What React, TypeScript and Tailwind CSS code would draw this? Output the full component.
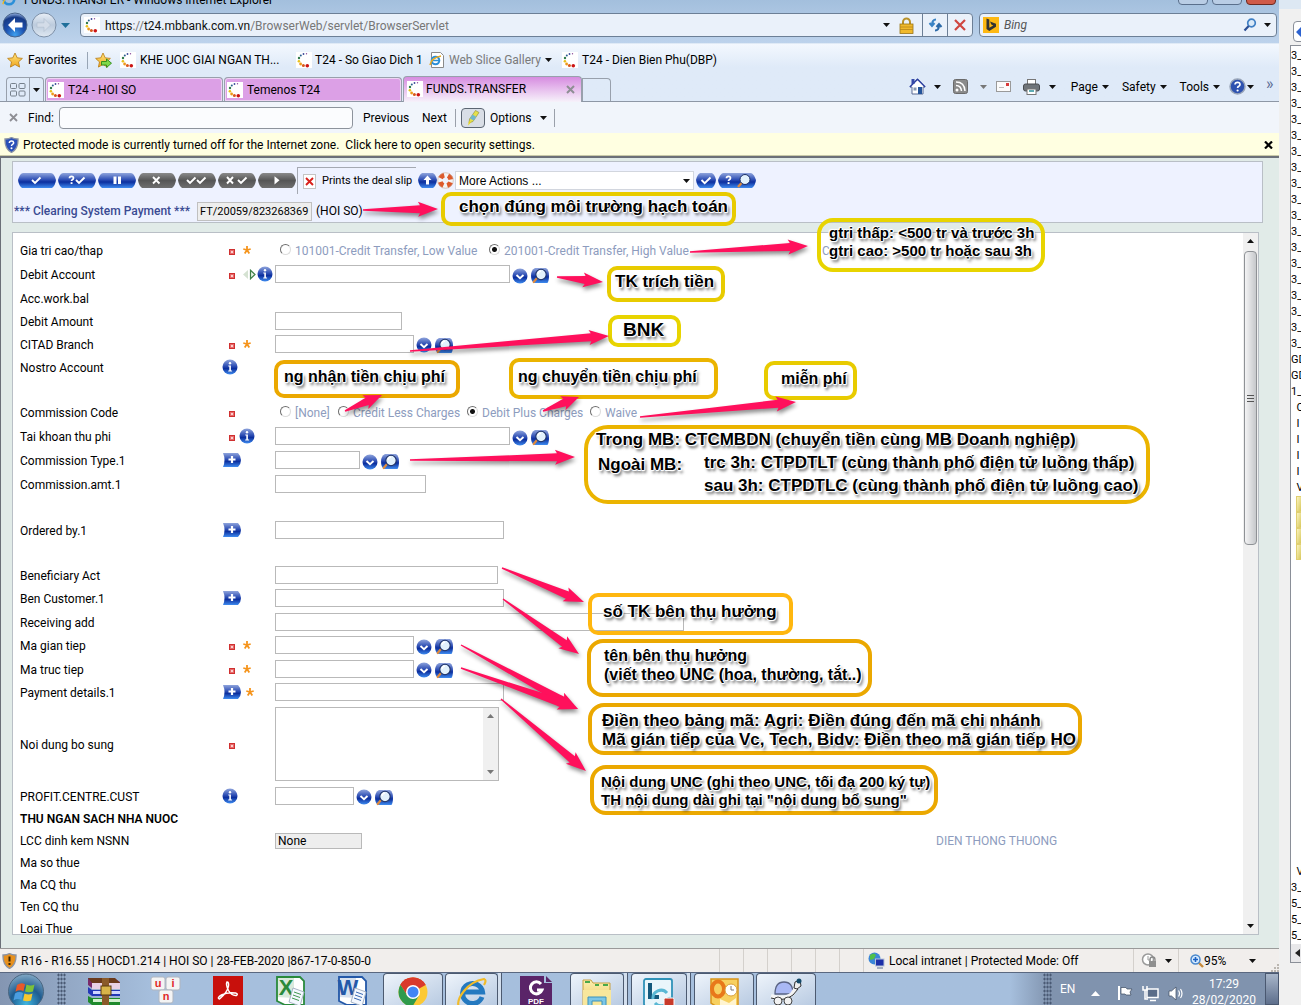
import React from "react";

const ui = "font-['Roboto',sans-serif]";

/* ---------- shared gradients ---------- */
function Defs() {
  return (
    <svg width="0" height="0" className="absolute" aria-hidden="true">
      <defs>
        <linearGradient id="blue" x1="0" y1="0" x2="0" y2="1">
          <stop offset="0" stopColor="#8fa4dc" />
          <stop offset="0.45" stopColor="#2c4db4" />
          <stop offset="0.6" stopColor="#0c2f9e" />
          <stop offset="1" stopColor="#3f8cf0" />
        </linearGradient>
        <linearGradient id="grey" x1="0" y1="0" x2="0" y2="1">
          <stop offset="0" stopColor="#8a8a8a" />
          <stop offset="0.5" stopColor="#565656" />
          <stop offset="1" stopColor="#6e6e6e" />
        </linearGradient>
        <radialGradient id="back" cx="0.5" cy="0.9" r="0.9">
          <stop offset="0" stopColor="#3fa0ee" />
          <stop offset="0.45" stopColor="#1c4fae" />
          <stop offset="0.8" stopColor="#173a86" />
          <stop offset="1" stopColor="#9db9e6" />
        </radialGradient>
        <linearGradient id="fwd" x1="0" y1="0" x2="0" y2="1">
          <stop offset="0" stopColor="#e9eff7" />
          <stop offset="0.5" stopColor="#bccbdd" />
          <stop offset="1" stopColor="#dfe8f2" />
        </linearGradient>
        <radialGradient id="orb" cx="0.5" cy="0.85" r="0.9">
          <stop offset="0" stopColor="#3fb5e0" />
          <stop offset="0.5" stopColor="#1e5c90" />
          <stop offset="1" stopColor="#8fb2cc" />
        </radialGradient>
        <linearGradient id="gold" x1="0" y1="0" x2="0" y2="1">
          <stop offset="0" stopColor="#ffe680" />
          <stop offset="1" stopColor="#f0a51c" />
        </linearGradient>
        <linearGradient id="folder" x1="0" y1="0" x2="0" y2="1">
          <stop offset="0" stopColor="#fbeeb0" />
          <stop offset="1" stopColor="#ecc75c" />
        </linearGradient>
      </defs>
    </svg>
  );
}

/* ---------- small icons ---------- */
const Tri = ({ gray = false, className = "" }: { gray?: boolean; className?: string }) => (
  <svg width="7" height="4" viewBox="0 0 7 4" className={"shrink-0 " + className}>
    <path d="M0 0h7L3.500 4z" fill={gray ? "#777" : "#111"} />
  </svg>
);

const Favicon = () => (
  <svg width="16" height="16" viewBox="0 0 16 16" className="shrink-0 bg-white">
    <circle cx="10.500" cy="1.700" r="0.700" fill="#8a4a9a" />
    <circle cx="7.500" cy="2" r="0.900" fill="#3a4a9a" />
    <circle cx="4.800" cy="3.400" r="1" fill="#2b5f8f" />
    <circle cx="3" cy="6" r="1.200" fill="#2f7a4a" />
    <circle cx="2.900" cy="9.200" r="1.300" fill="#e8c21c" />
    <circle cx="4.600" cy="12" r="1.400" fill="#ee9a1a" />
    <circle cx="7.400" cy="13.400" r="1.500" fill="#d8581c" />
    <circle cx="11.300" cy="13.700" r="1.800" fill="#cc1414" />
  </svg>
);

const Star = ({ arrow = false }: { arrow?: boolean }) => (
  <svg width="17" height="17" viewBox="0 0 17 17" className="shrink-0">
    <path d="M8 1l2.200 4.800 5.200.600-3.900 3.500 1.100 5.200L8 12.500l-4.600 2.600 1.100-5.200L.6 6.400l5.200-.6z" fill="url(#gold)" stroke="#b87a10" strokeWidth="0.800" />
    {arrow && <path d="M6.500 9.500h5V7l5 4.200-5 4.300V13h-5z" fill="#7fd84a" stroke="#2c8a1a" strokeWidth="0.900" />}
  </svg>
);

const Info = () => (
  <svg width="16" height="16" viewBox="0 0 16 16" className="shrink-0">
    <circle cx="8" cy="8" r="7.500" fill="url(#blue)" />
    <path d="M6.300 6.500h2.600v5h1.200v1H6.200v-1h1.100v-4h-1z" fill="#fff" />
    <circle cx="8" cy="4.300" r="1.200" fill="#fff" />
  </svg>
);

const Drop = () => (
  <svg width="16" height="16" viewBox="0 0 16 16" className="shrink-0">
    <circle cx="8" cy="8" r="7.500" fill="url(#blue)" />
    <path d="M4.500 7L8 10.200 11.500 7" fill="none" stroke="#fff" strokeWidth="1.900" />
  </svg>
);

const Lens = () => (
  <svg width="20" height="17" viewBox="0 0 20 17" className="shrink-0">
    <path d="M5 1h11q3 2 3 7.500T17.500 16H4Q1 14 1 8.500T5 1z" fill="url(#blue)" />
    <path d="M7 11l-3.300 4" stroke="#e08a3c" strokeWidth="2.200" strokeLinecap="round" />
    <circle cx="11" cy="7.500" r="5.200" fill="#e2f1fc" stroke="#1a2f66" strokeWidth="1.100" />
    <path d="M8 7a3 3 0 0 1 3-2.800" stroke="#fff" strokeWidth="1.400" fill="none" />
  </svg>
);

const Plus = () => (
  <svg width="20" height="16" viewBox="0 0 20 16" className="shrink-0">
    <path d="M1 1h15q3 3 3 7t-3 7H1q3-7 0-14z" fill="url(#blue)" />
    <path d="M10 4v7M6.500 7.500h7" stroke="#fff" strokeWidth="2.200" />
  </svg>
);

const Dot = () => (
  <svg width="17" height="16" viewBox="0 0 17 16" className="shrink-0">
    <rect x="7.500" y="7.500" width="5" height="5" fill="#e86a6a" stroke="#cf3030" />
    <rect x="9" y="9" width="2" height="2" fill="#fbd0d0" />
  </svg>
);

const Req = () => (
  <svg width="8" height="8" viewBox="0 0 8 8" className="ml-1 shrink-0">
    <path d="M4 0v4M4 4L.3 3M4 4l3.700-1M4 4L1.700 7.500M4 4l2.300 3.500" stroke="#f5941c" strokeWidth="1.800" />
  </svg>
);

const Sides = () => (
  <svg width="14" height="11" viewBox="0 0 14 11" className="ml-1 shrink-0">
    <path d="M5 1v9L0 5.500z" fill="#d5e2d2" />
    <path d="M7.500 1.200l4.500 4.300-4.500 4.300z" fill="#e9f4e6" stroke="#3f7f48" strokeWidth="1.200" />
  </svg>
);

type Pill = { name: string; off?: boolean; art: React.ReactNode };

const Check = ({ x }: { x: number }) => <path d={`M${x} 7l3 3 5.500-5.500`} fill="none" stroke="#fff" strokeWidth="1.900" />;

const pills: Pill[] = [
  { name: "Commit", art: <Check x={14} /> },
  { name: "Validate", art: (<><path d="M11.500 5.300q0-2 2-2t2 1.700q0 1.100-1.200 1.700-.8.500-.8 1.300" fill="none" stroke="#fff" strokeWidth="1.700" /><rect x="12.600" y="9.200" width="1.900" height="1.800" fill="#fff" /><Check x={18} /></>) },
  { name: "Hold", art: <path d="M17 3.500v7.500M21.500 3.500v7.500" stroke="#fff" strokeWidth="3" /> },
  { name: "Delete", off: true, art: <path d="M15 4l6.500 6.500M21.500 4L15 10.500" stroke="#fff" strokeWidth="1.900" /> },
  { name: "Authorise", off: true, art: (<><Check x={9} /><Check x={19} /></>) },
  { name: "Reverse", off: true, art: (<><path d="M9 4l6 6.500M15 4l-6 6.500" stroke="#fff" strokeWidth="1.900" /><Check x={20} /></>) },
  { name: "Run", off: true, art: <path d="M16.500 3.200v8.200l5-4.100z" fill="#fff" /> },
];

const PillButton = ({ p }: { p: Pill }) => (
  <button aria-label={p.name} className="shrink-0">
    <svg width="38" height="15" viewBox="0 0 38 15" className="block">
      <path d="M5 0h28q3 0 5 7-.5 5-4 8H4q-3.500-3-4-8Q2 0 5 0z" fill={p.off ? "url(#grey)" : "url(#blue)"} />
      {p.art}
    </svg>
  </button>
);

/* ---------- browser chrome ---------- */
function TitleBar() {
  return (
    <div className="flex h-[9px] items-end justify-between overflow-hidden">
      <div className="flex items-end gap-1 pl-[2px] text-xs leading-4">
        <svg width="14" height="14" viewBox="0 0 16 16" className="mb-[3px]">
          <circle cx="8" cy="8" r="6" fill="none" stroke="#2b8fd8" strokeWidth="3" />
          <path d="M1 14Q3 4 15 2" stroke="#f0b820" strokeWidth="1.500" fill="none" />
        </svg>
        <span className="pb-px pl-1">FUNDS.TRANSFER - Windows Internet Explorer</span>
      </div>
      <div className="flex gap-1 pr-[3px] pb-1">
        <div className="flex h-3 w-[30px] items-end justify-center rounded-b border border-[#5a6f8c] bg-[#b9cde5]"><i className="mb-[5px] h-1 w-2.5 border border-[#555] bg-white" /></div>
        <div className="flex h-3 w-[30px] items-end justify-center rounded-b border border-[#5a6f8c] bg-[#b9cde5]"><i className="mb-1 h-2 w-2 border border-[#555] bg-white" /></div>
        <div className="flex h-3 w-[30px] items-end justify-center rounded-b border border-[#6b2a22] bg-[#cf5a48]"><i className="mb-1 h-1 w-2.5 bg-white" /></div>
      </div>
    </div>
  );
}

function AddressBar() {
  return (
    <div className="flex h-[34px] items-center pt-[1px] pr-[2px] pl-[2px] pb-[3px]">
      <button aria-label="Back" className="shrink-0">
        <svg width="26" height="26" viewBox="0 0 26 26">
          <circle cx="13" cy="13" r="12" fill="url(#back)" stroke="#4a658c" />
          <path d="M13 6l-7 7 7 7v-4.600h7.500v-4.800H13z" fill="#fff" />
        </svg>
      </button>
      <button aria-label="Forward" className="ml-[3px] shrink-0">
        <svg width="26" height="26" viewBox="0 0 26 26">
          <circle cx="13" cy="13" r="12" fill="url(#fwd)" stroke="#7d90a8" />
          <path d="M13 6.500l6.500 6.500-6.500 6.500v-4.300H6v-4.400h7z" fill="#d3dce8" stroke="#b0bdcd" strokeWidth="0.600" />
        </svg>
      </button>
      <svg width="9" height="5" viewBox="0 0 9 5" className="mx-1 shrink-0"><path d="M0 0h9L4.500 5z" fill="#1f6f9a" /></svg>
      <div className="ml-[6px] flex h-6 flex-1 items-center rounded-sm border border-[#6c7f96] bg-[#eaf1fa]">
        <div className="flex flex-1 items-center gap-[5px] pr-2 pl-[3px]">
          <Favicon />
          <div aria-label="Address" className="flex-1 pt-px text-xs text-[#777]">
            <span className="text-[#111]">https</span>://<span className="text-[#111]">t24.mbbank.com.vn</span>/BrowserWeb/servlet/BrowserServlet
          </div>
          <Tri />
          <svg width="15" height="17" viewBox="0 0 15 17" className="ml-1">
            <path d="M4 8V5a3.500 3.500 0 0 1 7 0v3" fill="none" stroke="#b8912a" strokeWidth="2" />
            <rect x="1" y="7" width="13" height="9.500" fill="#f0b92c" stroke="#9a7418" strokeWidth="0.800" />
            <path d="M1 10h13M1 12.500h13" stroke="#b8861a" strokeWidth="0.800" />
          </svg>
        </div>
        <button aria-label="Refresh" className="flex h-full w-[25px] items-center justify-center border-l border-[#6c7f96]">
          <svg width="15" height="14" viewBox="0 0 15 14" fill="none" stroke="#3a83c4" strokeWidth="2">
            <path d="M8 1.500Q4 1.500 4 7M1.500 5L4 8l2.500-3" />
            <path d="M7 12.500q4 0 4-5.500M8.500 9L11 6l2.500 3" stroke="#2c6aa8" />
          </svg>
        </button>
        <button aria-label="Stop" className="flex h-full w-[25px] items-center justify-center border-l border-[#6c7f96]">
          <svg width="12" height="12" viewBox="0 0 12 12"><path d="M1 1l10 10M11 1L1 11" stroke="#cf4640" strokeWidth="2.200" /></svg>
        </button>
      </div>
      <div className="ml-[6px] flex h-6 w-[298px] shrink-0 items-center rounded-sm border border-[#6c7f96] bg-[#eaf1fa] px-[3px]">
        <svg width="16" height="16" viewBox="0 0 16 16" className="shrink-0"><rect width="16" height="16" fill="#fdb813" /><path d="M3.500 1.500l2.800 1v8.300l4-2.200-2-1L7 4.600l6 2.200v3L6.300 14 3.500 12z" fill="#333" /></svg>
        <input aria-label="Search Bing" placeholder="Bing" className="ml-[5px] w-0 flex-1 bg-transparent text-xs italic outline-none placeholder:text-[#555]" />
        <svg width="14" height="14" viewBox="0 0 14 14" className="mr-[7px]"><circle cx="8.500" cy="5" r="3.800" fill="#dbeaf8" stroke="#3f7fc4" strokeWidth="1.700" /><path d="M5.700 8L1.500 12.500" stroke="#2c4f94" strokeWidth="2.200" /></svg>
        <Tri className="mr-[2px]" />
      </div>
    </div>
  );
}

function FavoritesBar() {
  return (
    <div className="flex h-8 items-center pl-[7px] text-xs">
      <button className="flex w-[81px] items-center gap-1 border-r border-[#98a5b5]"><Star />Favorites</button>
      <button aria-label="Add to favorites" className="ml-[7px] mr-[8px]"><Star arrow /></button>
      <a href="#khe" className="flex w-[176px] items-center gap-1 whitespace-nowrap"><Favicon />KHE UOC GIAI NGAN TH...</a>
      <a href="#sgd" className="flex w-[133px] items-center gap-[3px] whitespace-nowrap"><Favicon />T24 - So Giao Dich 1</a>
      <button className="flex w-[133px] items-center gap-1 whitespace-nowrap text-[#7a7a7a]">
        <svg width="16" height="16" viewBox="0 0 16 16" className="shrink-0">
          <path d="M2.500.5h9l3 3v12h-12z" fill="#fff" stroke="#8a8a8a" />
          <circle cx="6.500" cy="8.500" r="3.800" fill="none" stroke="#2b8fd8" strokeWidth="2" />
          <path d="M3 8.500h7" stroke="#2b8fd8" strokeWidth="1.500" /><path d="M1 13Q2 6 12 4" stroke="#e8a820" strokeWidth="1.500" fill="none" />
        </svg>
        Web Slice Gallery <Tri />
      </button>
      <a href="#dbp" className="flex items-center gap-1 whitespace-nowrap"><Favicon />T24 - Dien Bien Phu(DBP)</a>
    </div>
  );
}

function TabRow() {
  return (
    <div className="flex h-[26px] items-end border-b border-[#8e97a5] pl-[6px] text-xs">
      <div className="flex h-6 shrink-0 rounded-t border border-b-0 border-[#98a0ac]">
        <button aria-label="Quick tabs" className="flex w-[23px] items-center justify-center border-r border-[#98a0ac]">
          <svg width="16" height="14" viewBox="0 0 16 14" fill="none" stroke="#76808c">
            <rect x="0.500" y="0.500" width="6" height="5" rx="1" /><rect x="9" y="0.500" width="6" height="5" rx="1" /><rect x="0.500" y="8" width="6" height="5" rx="1" /><rect x="9" y="8" width="6" height="5" rx="1" />
          </svg>
        </button>
        <button aria-label="Tab list" className="flex w-[13px] items-center justify-center"><Tri /></button>
      </div>
      <button className="ml-px flex h-6 w-[178px] items-center gap-1 rounded-t border border-b-0 border-[#98a0ac] bg-[#dca0e6] pl-[2px] shadow-[inset_0_0_0_1px_#eed3f3]"><Favicon />T24 - HOI SO</button>
      <button className="ml-px flex h-6 w-[178px] items-center gap-1 rounded-t border border-b-0 border-[#98a0ac] bg-[#dca0e6] pl-[2px] shadow-[inset_0_0_0_1px_#eed3f3]"><Favicon />Temenos T24</button>
      <div className="-mb-px ml-px flex h-[26px] w-[179px] items-center gap-[3px] rounded-t border border-b-0 border-[#98a0ac] bg-linear-to-b from-[#d68ce0] to-[#f6f2fa] pr-[6px] pb-px pl-[3px]">
        <Favicon />
        <span className="flex-1">FUNDS.TRANSFER</span>
        <button aria-label="Close tab"><svg width="9" height="9" viewBox="0 0 9 9"><path d="M1 1l7 7M8 1L1 8" stroke="#8e8e94" strokeWidth="2" /></svg></button>
      </div>
      <button aria-label="New tab" className="h-[23px] w-[29px] rounded-tr border border-b-0 border-[#98a0ac]" />
      <div className="flex flex-1 items-center justify-end self-stretch pr-[25px] pb-1">
        <svg width="17" height="17" viewBox="0 0 17 17"><path d="M8.500 1L1 9h2v7h11V9h2z" fill="#fff" stroke="#5a6a94" /><path d="M.8 9L8.500 1.200 16.200 9" fill="none" stroke="#2c3fa0" strokeWidth="1.400" /><rect x="2.500" y="1" width="3" height="5" fill="#3549a8" /><rect x="9" y="9" width="4" height="7" fill="#23539a" /><rect x="4.500" y="9.500" width="3" height="3" fill="#8798b0" /></svg>
        <Tri className="ml-2" />
        <svg width="15" height="15" viewBox="0 0 15 15" className="ml-3"><rect x="0.500" y="0.500" width="14" height="14" rx="2" fill="#8b8b8b" stroke="#6a6a6a" /><circle cx="4" cy="11" r="1.500" fill="#fff" /><path d="M3 6.500q5 0 5.500 5.500M3 3q8.500 0 9 9" fill="none" stroke="#fff" strokeWidth="1.500" /></svg>
        <Tri gray className="ml-3" />
        <svg width="15" height="11" viewBox="0 0 15 11" className="ml-[9px]"><rect x="0.500" y="0.500" width="14" height="10" fill="#fbfbfb" stroke="#9a9a9a" /><rect x="10" y="2" width="3" height="3" fill="#d83a3a" /><path d="M3 6.500h5" stroke="#bbb" /></svg>
        <svg width="17" height="16" viewBox="0 0 17 16" className="ml-3"><rect x="4.500" y="0.500" width="8" height="5" fill="#fff" stroke="#777" /><rect x="0.500" y="5" width="16" height="7" rx="2" fill="#6f7479" stroke="#484b4f" /><rect x="4" y="10" width="9" height="5.500" fill="#fff" stroke="#777" /><path d="M6 12h5" stroke="#2a8f9a" strokeWidth="1.500" /></svg>
        <Tri className="ml-[9px]" />
        <button className="ml-[15px] flex items-center gap-1">Page<Tri /></button>
        <button className="ml-[13px] flex items-center gap-1">Safety<Tri /></button>
        <button className="ml-[13px] flex items-center gap-1">Tools<Tri /></button>
        <button aria-label="Help" className="ml-[9px] flex items-center gap-px">
          <svg width="17" height="17" viewBox="0 0 17 17"><circle cx="8.500" cy="8.500" r="7.500" fill="#2e52b0" stroke="#98a4b8" strokeWidth="1.500" /><path d="M6 6.500Q6.200 4.300 8.600 4.300T11 6.400q0 1.200-1.300 1.900-1.100.600-1.100 1.600" fill="none" stroke="#fff" strokeWidth="1.700" /><circle cx="8.600" cy="12.500" r="1.100" fill="#fff" /></svg>
          <Tri />
        </button>
      </div>
      <button className="-ml-[13px] w-[13px] self-start text-left text-base leading-none text-[#5a6a94]">»</button>
    </div>
  );
}

function FindBar() {
  return (
    <div className="flex h-[31px] items-center bg-[#f1f5fb] pl-[9px] text-xs">
      <button aria-label="Close find bar"><svg width="9" height="9" viewBox="0 0 9 9"><path d="M1 1l7 7M8 1L1 8" stroke="#8e8e94" strokeWidth="1.800" /></svg></button>
      <label htmlFor="find" className="ml-[10px] w-[31px]">Find:</label>
      <input id="find" className="h-[22px] w-[294px] rounded-sm border border-[#8d939c] bg-[#fbfcfe] px-1 outline-none" />
      <button className="ml-[10px] w-[59px] text-left">Previous</button>
      <button className="w-[33px] text-left">Next</button>
      <div className="h-[18px] w-px bg-[#9aa0aa]" />
      <button aria-label="Highlight" className="ml-[5px] flex h-5 w-6 items-center justify-center rounded-sm border border-[#5c6672] bg-[#d9dee6]">
        <svg width="14" height="16" viewBox="0 0 14 16"><path d="M9.500.5l3.500 2-6 9-4 1.500.5-4z" fill="#e6e04a" stroke="#8a8a3a" strokeWidth="0.600" /><path d="M6.500 4.500l3.700 2.200-2.500 3.800L4 8.500z" fill="#6fb6cf" /><path d="M3 11l2 1.500L2 15.500z" fill="#e8d820" /></svg>
      </button>
      <button className="ml-[5px] flex items-center gap-2">Options<Tri /></button>
      <div className="ml-[7px] h-[18px] w-px bg-[#9aa0aa]" />
    </div>
  );
}

const Shield = ({ warn = false }: { warn?: boolean }) => (
  <svg width="15" height="16" viewBox="0 0 15 16" className="shrink-0">
    <path d="M7.500.5q3 1.700 6.500 1.500.500 10-6.500 13.500Q.5 12 1 2 4.500 2.200 7.500.5z" fill={warn ? "#e8901c" : "#2a50b8"} stroke="#8a93a5" strokeWidth="1.300" />
    {warn ? <path d="M7.500 3.500v5M7.500 10v2" stroke="#3a2400" strokeWidth="2" /> : (<><path d="M5.300 6q.2-2 2.200-2t2.200 1.800q0 1-1.200 1.600-1 .5-1 1.500" fill="none" stroke="#fff" strokeWidth="1.500" /><circle cx="7.500" cy="11.200" r="1" fill="#fff" /></>)}
  </svg>
);

function InfoBar() {
  return (
    <div className="flex h-[23px] items-center border-b border-[#c9c9a8] bg-[#ffffe1] pt-px pr-[6px] pl-1 text-xs">
      <Shield />
      <span className="ml-1 flex-1 whitespace-pre">Protected mode is currently turned off for the Internet zone.  Click here to open security settings.</span>
      <button aria-label="Close notification"><svg width="9" height="8" viewBox="0 0 9 8"><path d="M1 .5l7 7M8 .5l-7 7" stroke="#000" strokeWidth="2.200" /></svg></button>
    </div>
  );
}

/* ---------- transaction header ---------- */
function DealHeader() {
  return (
    <section className="mr-[16px] h-[62px] border border-[#b9bfc6] bg-[#eef2ff] pt-[5px]">
      <div className="flex h-[27px] items-center pl-[5px]">
        <div className="flex gap-[2px]">{pills.map((p) => <PillButton key={p.name} p={p} />)}</div>
        <button className="ml-px flex h-[27px] w-[119px] items-center gap-[6px] border border-r-0 border-b-0 border-[#a5a9b2] pl-[5px] whitespace-nowrap">
          <svg width="13" height="15" viewBox="0 0 13 15" className="shrink-0"><rect x="0.500" y="0.500" width="12" height="14" fill="#fff" stroke="#c4c4c4" /><path d="M3 4l7 7M10 4l-7 7" stroke="#d8201c" strokeWidth="1.900" /></svg>
          <span className="text-[11px]">Prints the deal slip</span>
        </button>
        <button aria-label="Expand" className="ml-[2px]"><svg width="19" height="15" viewBox="0 0 19 15"><path d="M4 0h11q3 2 4 7-1 6-4 8H4q-3-2-4-8 1-5 4-7z" fill="url(#blue)" /><path d="M9.500 2.500L5.500 7H8v4.500h3V7h2.500z" fill="#fff" /></svg></button>
        <button aria-label="Help"><svg width="17" height="17" viewBox="0 0 17 17"><circle cx="8.500" cy="8.500" r="5.500" fill="none" stroke="#f4f4f4" strokeWidth="5" /><circle cx="8.500" cy="8.500" r="5.500" fill="none" stroke="#dd5a2c" strokeWidth="5" strokeDasharray="4.600 4.040" strokeDashoffset="-2" /><circle cx="8.500" cy="8.500" r="7.800" fill="none" stroke="#c9a898" strokeWidth="0.600" /></svg></button>
        <div className="relative ml-[1px] flex items-center">
          <select aria-label="More actions" className="h-[19px] w-[239px] appearance-none border border-[#d2d6de] bg-white px-[3px] font-['Liberation_Sans',sans-serif] text-xs leading-4 outline-none"><option>More Actions ...</option></select>
          <Tri className="pointer-events-none absolute right-[4px]" />
        </div>
        <button aria-label="Go" className="ml-[2px]"><svg width="20" height="15" viewBox="0 0 20 15"><path d="M4 0h12q3 2 4 7-1 6-4 8H4q-3-2-4-8 1-5 4-7z" fill="url(#blue)" /><path d="M5.500 7l3.200 3.200L14.500 4.500" fill="none" stroke="#fff" strokeWidth="1.900" /></svg></button>
        <button aria-label="Find deal" className="ml-[2px]"><svg width="38" height="16" viewBox="0 0 38 16"><path d="M5 0h28q3 1 5 7-.5 5-4 8H4q-3.500-3-4-8Q2 1 5 0z" fill="url(#blue)" /><path d="M8.500 5.300q0-2 2-2t2 1.700q0 1.100-1.200 1.700-.8.500-.8 1.300" fill="none" stroke="#fff" strokeWidth="1.700" /><rect x="9.600" y="9.200" width="1.900" height="1.800" fill="#fff" /><path d="M24 9.500l-4 4.500" stroke="#e08a3c" strokeWidth="2.400" /><circle cx="27" cy="6.500" r="5" fill="#e2f1fc" stroke="#1a2f66" /></svg></button>
      </div>
      <div className="flex h-7 items-end pb-px pl-[1px] text-xs leading-[19px]">
        <h1 className="w-[182px] font-medium whitespace-nowrap text-[#3a4a92]">*** Clearing System Payment ***</h1>
        <input aria-label="Reference" readOnly value="FT/20059/823268369" className="mx-px h-[19px] w-[115px] border border-[#c0c0c0] bg-[#eeeeee] px-[2px] text-[11px] outline-none" />
        <span className="ml-[3px]">(HOI SO)</span>
      </div>
    </section>
  );
}

/* ---------- form ---------- */
type Row = {
  label: string;
  h?: string;
  marks?: React.ReactNode;
  body?: React.ReactNode;
  field?: string;
  lookup?: boolean;
  bold?: boolean;
};

const radioCls =
  "size-[11px] shrink-0 appearance-none rounded-full border border-t-[#6e6e6e] border-l-[#6e6e6e] border-r-[#dcdcdc] border-b-[#dcdcdc] bg-white mb-1 checked:bg-[radial-gradient(circle,#111_2px,#fff_3px)]";

const Radio = ({ group, text, w, on = false }: { group: string; text: string; w: string; on?: boolean }) => (
  <label className={"flex items-center gap-1 whitespace-nowrap text-[#8d9cbe] " + w}>
    <input type="radio" name={group} defaultChecked={on} className={radioCls} />
    {text}
  </label>
);

const rows: Row[] = [
  { label: "Gia tri cao/thap", h: "h-6", marks: <><Dot /><Req /></>, body: (
    <div className="flex pt-[2px] pl-[5px]">
      <Radio group="value" text="101001-Credit Transfer, Low Value" w="w-[209px]" />
      <Radio group="value" text="201001-Credit Transfer, High Value" w="w-[333px]" on />
      <span className="text-[#8d9cbe]">C</span>
    </div>) },
  { label: "Debit Account", h: "h-6", marks: <><Dot /><Sides /><Info /></>, field: "w-[235px]", lookup: true },
  { label: "Acc.work.bal" },
  { label: "Debit Amount", field: "w-[127px]" },
  { label: "CITAD Branch", marks: <><Dot /><Req /></>, field: "w-[139px]", lookup: true },
  { label: "Nostro Account", marks: <Info /> },
  { label: "", h: "h-[22px]" },
  { label: "Commission Code", h: "h-6", marks: <Dot />, body: (
    <div className="flex pt-[2px] pl-[5px]">
      <Radio group="commission" text="[None]" w="w-[58px]" />
      <Radio group="commission" text="Credit Less Charges" w="w-[129px]" />
      <Radio group="commission" text="Debit Plus Charges" w="w-[123px]" on />
      <Radio group="commission" text="Waive" w="w-[58px]" />
    </div>) },
  { label: "Tai khoan thu phi", h: "h-6", marks: <><Dot /><Info /></>, field: "w-[235px]", lookup: true },
  { label: "Commission Type.1", h: "h-6", marks: <Plus />, field: "w-[85px]", lookup: true },
  { label: "Commission.amt.1", h: "h-6", field: "w-[151px]" },
  { label: "", h: "h-[22px]" },
  { label: "Ordered by.1", marks: <Plus />, field: "w-[229px]" },
  { label: "", h: "h-[22px]" },
  { label: "Beneficiary Act", field: "w-[223px]" },
  { label: "Ben Customer.1", h: "h-6", marks: <Plus />, field: "w-[229px]" },
  { label: "Receiving add", field: "w-[409px]" },
  { label: "Ma gian tiep", h: "h-6", marks: <><Dot /><Req /></>, field: "w-[139px]", lookup: true },
  { label: "Ma truc tiep", marks: <><Dot /><Req /></>, field: "w-[139px]", lookup: true },
  { label: "Payment details.1", h: "h-6", marks: <><Plus /><Req /></>, field: "w-[229px]" },
  { label: "Noi dung bo sung", h: "h-20", marks: <Dot />, body: (
    <div className="flex h-[74px] w-[224px] border border-[#b9b9b9]">
      <textarea aria-label="Noi dung bo sung" className="w-0 flex-1 resize-none overflow-hidden px-1 outline-none" />
      <div className="flex w-[15px] flex-col items-center justify-between bg-[#f0f0f0] py-[6px]">
        <Tri gray className="rotate-180" /><Tri gray />
      </div>
    </div>) },
  { label: "PROFIT.CENTRE.CUST", marks: <Info />, field: "w-[79px]", lookup: true },
  { label: "THU NGAN SACH NHA NUOC", h: "h-[22px]", bold: true },
  { label: "LCC dinh kem NSNN", h: "h-[22px]", body: (
    <div className="flex items-center pt-px">
      <input aria-label="LCC dinh kem NSNN" readOnly value="None" className="h-4 w-[87px] border border-[#b9b9b9] bg-[#eeeeee] px-[2px] outline-none" />
      <span className="ml-[574px] text-[#8d9cbe]">DIEN THONG THUONG</span>
    </div>) },
  { label: "Ma so thue", h: "h-[22px]" },
  { label: "Ma CQ thu", h: "h-[22px]" },
  { label: "Ten CQ thu", h: "h-[22px]" },
  { label: "Loai Thue", h: "h-[22px]" },
];

function FormRow({ r }: { r: Row }) {
  const id = r.label.replace(/\W+/g, "-");
  return (
    <div className={"flex shrink-0 items-center " + (r.h ?? "h-[23px]")}>
      {r.field ? (
        <label htmlFor={id} className="w-[202px] shrink-0 pt-[2px]">{r.label}</label>
      ) : (
        <span className={"w-[202px] shrink-0 pt-[2px] whitespace-nowrap " + (r.bold ? "font-semibold" : "")}>{r.label}</span>
      )}
      <div className="flex w-[53px] shrink-0 items-center">{r.marks}</div>
      {r.field && <input id={id} className={"h-[18px] shrink-0 border border-[#b9b9b9] bg-white px-1 outline-none " + r.field} />}
      {r.lookup && (
        <div className="flex items-center gap-[2px] pt-[3px] pl-[2px]">
          <button aria-label={"List " + r.label}><Drop /></button>
          <button aria-label={"Search " + r.label}><Lens /></button>
        </div>
      )}
      {r.body}
    </div>
  );
}

function DealForm() {
  return (
    <form className="mt-[9px] mr-5 flex min-h-0 flex-1 border border-[#b9bfc6] bg-white text-xs">
      <div className="flex min-w-0 flex-1 flex-col overflow-hidden pt-[5px] pl-[7px]">
        {rows.map((r, i) => <FormRow key={i} r={r} />)}
      </div>
      <div className="flex w-[15px] shrink-0 flex-col items-center bg-[#f0f0f0]">
        <Tri className="mt-[6px] mb-[8px] shrink-0 rotate-180" />
        <div className="flex h-[42%] w-[13px] flex-col items-center justify-center gap-[2px] rounded-sm border border-[#8f9296] bg-linear-to-r from-[#f4f4f5] to-[#c6c8cb]">
          <i className="h-px w-[7px] bg-[#555]" /><i className="h-px w-[7px] bg-[#555]" /><i className="h-px w-[7px] bg-[#555]" />
        </div>
        <Tri className="mt-auto mb-[6px]" />
      </div>
    </form>
  );
}

/* ---------- annotations over the form ---------- */
const arrows: [number, number, number, number][] = [
  [363, 210, 438, 209], [690, 252, 808, 246], [557, 277, 603, 282], [410, 351, 609, 336],
  [345, 411, 382, 395], [543, 411, 579, 397], [640, 417, 796, 402], [410, 460, 575, 457],
  [502, 568, 584, 602], [503, 599, 579, 654], [461, 645, 578, 709], [461, 668, 578, 709], [501, 699, 586, 771],
];

function arrowPath([x1, y1, x2, y2]: [number, number, number, number]) {
  const len = Math.hypot(x2 - x1, y2 - y1);
  const ux = (x2 - x1) / len;
  const uy = (y2 - y1) / len;
  const head = Math.min(20, len * 0.45);
  const at = (d: number, s: number) => `${x1 + ux * d - uy * s},${y1 + uy * d + ux * s}`;
  return [at(0, -0.7), at(len - head + 2, -4), at(len - head, -7.5), at(len, 0), at(len - head, 7.5), at(len - head + 2, 4), at(0, 0.7)].join(" ");
}

const callouts: { box: string; lines: string[] }[] = [
  { box: "left-[441px] top-[192px] w-[295px] h-[34px] rounded-[10px] border-[#e8cb00] pl-[14px] pt-px text-[17px] leading-5", lines: ["chọn đúng môi trường hạch toán"] },
  { box: "left-[817px] top-[218px] w-[228px] h-[54px] rounded-2xl border-[#e8d400] pl-2 pt-[2px] text-[15px] leading-[18px]", lines: ["gtri thấp: <500 tr và trước 3h", "gtri cao: >500 tr hoặc sau 3h"] },
  { box: "left-[607px] top-[266px] w-[118px] h-[36px] rounded-[10px] border-[#e8cb00] pl-1 pt-[2px] text-[17px] leading-5", lines: ["TK trích tiền"] },
  { box: "left-[608px] top-[315px] w-[73px] h-[32px] rounded-[10px] border-[#e8d400] pl-[11px] pt-px text-[19px] leading-5", lines: ["BNK"] },
  { box: "left-[274px] top-[360px] w-[186px] h-[38px] rounded-[10px] border-[#eba800] pl-[6px] pt-[3px] text-base leading-5", lines: ["ng nhận tiền chịu phí"] },
  { box: "left-[509px] top-[358px] w-[209px] h-[41px] rounded-[10px] border-[#ebb400] pl-[5px] pt-[5px] text-base leading-5", lines: ["ng chuyển tiền chịu phí"] },
  { box: "left-[764px] top-[361px] w-[93px] h-[39px] rounded-[10px] border-[#e8cb00] pl-[13px] pt-1 text-base leading-5", lines: ["miễn phí"] },
  { box: "left-[588px] top-[593px] w-[205px] h-[42px] rounded-[10px] border-[#ffb70f] pl-[11px] pt-[5px] text-[17px] leading-5", lines: ["số TK bên thụ hưởng"] },
  { box: "left-[587px] top-[639px] w-[285px] h-[58px] rounded-2xl border-[#eba800] pl-[13px] pt-[3px] text-base leading-[19px]", lines: ["tên bên thụ hưởng", "(viết theo UNC (hoa, thường, tắt..)"] },
  { box: "left-[588px] top-[703px] w-[494px] h-[52px] rounded-2xl border-[#eba800] pl-[10px] pt-1 text-[17px] leading-[19px]", lines: ["Điền theo bảng mã: Agri: Điền đúng đến mã chi nhánh", "Mã gián tiếp của Vc, Tech, Bidv: Điền theo mã gián tiếp HO"] },
  { box: "left-[590px] top-[765px] w-[348px] h-[50px] rounded-2xl border-[#eba800] pl-[7px] pt-1 text-[15px] leading-[18px]", lines: ["Nội dung UNC (ghi theo UNC, tối đạ 200 ký tự)", "TH nội dung dài ghi tại \"nội dung bổ sung\""] },
];

function Annotations() {
  return (
    <div className="pointer-events-none absolute inset-0 font-['Liberation_Sans',sans-serif] font-bold whitespace-nowrap text-black [text-shadow:1px_0_0_#fff,-1px_0_0_#fff,0_1px_0_#fff,0_-1px_0_#fff,1px_1px_1px_#fff,-1px_-1px_1px_#fff,2px_3px_3px_rgba(0,0,0,0.65)]">
      {callouts.map((c) => (
        <div key={c.lines[0]} className={"absolute border-4 " + c.box}>
          {c.lines.map((l) => <p key={l}>{l}</p>)}
        </div>
      ))}
      <div className="absolute top-[425px] left-[584px] flex h-[79px] w-[566px] flex-col gap-[3px] rounded-3xl border-4 border-[#ebb400] pt-px pl-2 text-[17px] leading-5">
        <p>Trong MB: CTCMBDN (chuyển tiền cùng MB Doanh nghiệp)</p>
        <div className="flex pl-[2px]">
          <p className="w-[106px] pt-[2px]">Ngoài MB:</p>
          <div className="flex flex-col gap-[3px]">
            <p>trc 3h: CTPDTLT (cùng thành phố điện tử luồng thấp)</p>
            <p>sau 3h: CTPDTLC (cùng thành phố điện tử luồng cao)</p>
          </div>
        </div>
      </div>
      <svg className="absolute inset-0 h-full w-full [filter:drop-shadow(1px_3px_2px_rgba(0,0,0,0.45))]">
        {arrows.map((a) => <polygon key={a.join()} points={arrowPath(a)} fill="#ff105c" />)}
      </svg>
    </div>
  );
}

/* ---------- status bar and taskbar ---------- */
function StatusBar() {
  return (
    <div className="flex h-6 shrink-0 items-center border-t border-[#9a9a9a] bg-[#f1eeec] pl-[2px] text-xs">
      <Shield warn />
      <span className="ml-1 flex-1 whitespace-nowrap">R16 - R16.55 | HOCD1.214 | HOI SO | 28-FEB-2020 |867-17-0-850-0</span>
      {[0, 1, 2, 3, 4, 5].map((i) => <div key={i} className="h-full w-6 border-l border-[#d4d0cc]" />)}
      <div className="flex h-full w-[270px] items-center gap-1 border-l border-[#d4d0cc] pl-1 whitespace-nowrap">
        <svg width="17" height="17" viewBox="0 0 17 17" className="shrink-0"><circle cx="6.500" cy="6.500" r="6" fill="#3a86d8" /><path d="M2 3q4-3 6 0l-2 4-4 1zM8 8l3-1-1 4z" fill="#4fc04a" /><rect x="7.500" y="7" width="8.500" height="7" fill="#1c2fa8" stroke="#b8c4d8" /><path d="M9 16h6" stroke="#8a98b0" strokeWidth="1.500" /></svg>
        Local intranet | Protected Mode: Off
      </div>
      <button aria-label="Privacy" className="flex h-full w-[45px] items-center justify-center gap-2 border-l border-[#d4d0cc]">
        <svg width="16" height="15" viewBox="0 0 16 15"><circle cx="7" cy="6.500" r="5.500" fill="#fff" stroke="#9a9a9a" strokeWidth="1.500" /><path d="M7 3v4h3" stroke="#9a9a9a" fill="none" /><path d="M9 8V6.500a2.500 2.500 0 0 1 5 0V8" stroke="#8a8a8a" fill="none" strokeWidth="1.300" /><rect x="8" y="8" width="7" height="6" fill="#8f8f8f" /></svg>
        <Tri />
      </button>
      <button className="flex h-full w-[92px] items-center border-l border-[#d4d0cc] pl-[11px]">
        <svg width="14" height="14" viewBox="0 0 14 14"><path d="M8.500 8.500L13 13" stroke="#c88a3a" strokeWidth="2.400" /><circle cx="5.500" cy="5.500" r="4.500" fill="#d8ecff" stroke="#4a88cc" strokeWidth="1.500" /><path d="M5.500 3v5M3 5.500h5" stroke="#1c62c4" strokeWidth="1.600" /></svg>
        <span className="w-[45px] text-left">95%</span><Tri />
      </button>
      <svg width="9" height="9" viewBox="0 0 9 9" className="self-end"><path d="M7 1h2v2H7zM4 4h2v2H4zM7 4h2v2H7zM1 7h2v2H1zM4 7h2v2H4zM7 7h2v2H7z" fill="#bbb6b0" /></svg>
    </div>
  );
}

const Grip = () => <div className="h-full w-[9px] shrink-0 bg-[radial-gradient(#4a5a74_0.7px,transparent_1.4px)] bg-[size:3px_4px]" />;

const RarIcon = () => (
  <svg width="32" height="32" viewBox="0 0 32 32"><path d="M0 2h26l6 4v6H4L0 9z" fill="#7a2a6a" /><path d="M4 7h28v6H4z" fill="#e8d0e4" /><path d="M0 2l4 5h28l-5-5z" fill="#6a3a1c" /><path d="M0 11l4 3h28v6H4l-4-3z" fill="#2438b8" /><path d="M5 15h27v3H5z" fill="#cfd6ff" /><path d="M0 20l4 2h28v7H4l-4-3z" fill="#1e8a2c" /><path d="M5 23h27v3H5z" fill="#d2f0cf" /><path d="M14 2h7v28h-7z" fill="#8a5a2a" /><rect x="13" y="10" width="10" height="9" fill="#d8b44a" stroke="#5a3a10" /></svg>
);
const Key = ({ x, y, c }: { x: number; y: number; c: string }) => (
  <g><rect x={x} y={y} width="14" height="13" rx="2" fill="#f4f4f4" stroke="#b0b6c0" /><text x={x + 7} y={y + 10} textAnchor="middle" fontSize="11" fontWeight="700" fill="#e02a2a" fontFamily="Liberation Sans">{c}</text></g>
);
const UniIcon = () => <svg width="32" height="32" viewBox="0 0 32 32"><Key x={1} y={1} c="u" /><Key x={16} y={1} c="i" /><Key x={9} y={14} c="n" /></svg>;
const PdfIcon = () => <svg width="30" height="30" viewBox="0 0 30 30"><rect width="30" height="30" fill="#c8100c" /><path d="M14 6q2 0 1.500 4-.8 6-9 13-3-1 2-4 6-3 14-2 3 1 1 2.500-5 .5-8-5-3-6-1.500-8.500z" fill="none" stroke="#fff" strokeWidth="1.500" /></svg>;
const Doc = ({ c, l }: { c: string; l: string }) => (
  <svg width="30" height="31" viewBox="0 0 30 31"><path d="M2 1h23l4 4v24H10L2 25z" fill="#fff" stroke={c} strokeWidth="1.800" /><path d="M1 2l18-2v22L1 21z" fill={c} opacity="0.180" /><text x="11" y="19" textAnchor="middle" fontSize="22" fontWeight="700" fill={c} fontFamily="Liberation Sans">{l}</text><path d="M18 12l11 4-4 14-11-4z" fill="#f4f8ff" stroke="#a8b4c4" /><path d="M19 16l7 2.500M18 19l7 2.500M17 22l7 2.500" stroke={c} strokeWidth="0.900" /></svg>
);
const ChromeIcon = () => (
  <svg width="30" height="30" viewBox="0 0 30 30"><circle cx="15" cy="15" r="14.500" fill="#fcc934" /><path d="M15 15L2.400 7.800A14.500 14.500 0 0 1 27.600 8z" fill="#d93a2c" /><path d="M15 8h12.600A14.500 14.500 0 0 0 2.400 7.800L9 18z" fill="#d93a2c" /><path d="M2.400 7.800A14.500 14.500 0 0 0 14.500 29.500L21 18.500 9 18z" fill="#2f9a4c" /><circle cx="15" cy="15" r="7" fill="#fff" /><circle cx="15" cy="15" r="5.500" fill="#4285f4" /></svg>
);
const IeIcon = () => (
  <svg width="32" height="32" viewBox="0 0 32 32"><path d="M26 20a10 10 0 1 1 .5-5H9" fill="none" stroke="#2479c0" strokeWidth="5" /><path d="M3 30Q0 24 8 14T28 2q3 1 0 6" fill="none" stroke="#f2bb28" strokeWidth="2.200" /></svg>
);
const FoxitIcon = () => (
  <svg width="32" height="32" viewBox="0 0 32 32"><path d="M0 0h24v7h8v25H0z" fill="#5a2468" /><path d="M26 0l6 6h-6z" fill="#5a2468" /><path d="M21 8a6 6 0 1 0 1 6h-5" fill="none" stroke="#fff" strokeWidth="3" /><text x="16" y="28" textAnchor="middle" fontSize="8" fontWeight="700" fill="#fff" fontFamily="Liberation Sans">PDF</text></svg>
);
const FolderIcon = () => (
  <svg width="32" height="32" viewBox="0 0 32 32"><path d="M2 3h8l2 3h17v24H2z" fill="url(#folder)" stroke="#c8a040" /><path d="M4 5h5M14 8h4M22 8h5" stroke="#4aa84a" strokeWidth="2" /><path d="M2 13h28v17H2z" fill="#f8e79c" /><path d="M7 32V20h18v12h-4v-8H11v8z" fill="#7cc6e6" stroke="#3a92bc" /></svg>
);
const LyncIcon = () => (
  <svg width="32" height="32" viewBox="0 0 32 32"><rect x="1" y="2" width="28" height="27" rx="2" fill="#eaf6fb" stroke="#2f92b8" strokeWidth="1.800" /><path d="M7 6v14h9" fill="none" stroke="#15597c" strokeWidth="4" /><path d="M10 22a8 8 0 0 1 14-6M26 20a8 8 0 0 1-14 6" fill="none" stroke="#5ab8d4" strokeWidth="3" /><rect x="21" y="21" width="10" height="11" rx="1.500" fill="#c83a2a" stroke="#fff" /></svg>
);
const OutlookIcon = () => (
  <svg width="32" height="32" viewBox="0 0 32 32"><path d="M3 2h27v28H9l-6-4z" fill="#f7d060" stroke="#d8941a" strokeWidth="1.500" /><ellipse cx="10" cy="12" rx="6" ry="7.500" fill="none" stroke="#e8781a" strokeWidth="4" /><circle cx="23" cy="13" r="6" fill="#fff" stroke="#d8a040" /><path d="M23 9v4h3" stroke="#777" fill="none" /><path d="M12 22l9 4 7-5v8H12z" fill="#fff4d0" /></svg>
);
const TortoiseIcon = () => (
  <svg width="32" height="30" viewBox="0 0 32 30"><path d="M5 17q0-12 9-12t9 12z" fill="#a9b8f4" stroke="#5a6484" strokeWidth="1.300" /><path d="M1 19q13 4 21-2l4-6" stroke="#f4f4f4" strokeWidth="4" fill="none" /><path d="M1 21q13 4 22-3l5-6" stroke="#333" fill="none" /><circle cx="8" cy="24" r="4" fill="#f2f2f2" stroke="#444" /><circle cx="18" cy="24" r="4" fill="#f2f2f2" stroke="#444" /><path d="M24 11l1-6 5-2 1 6-4 3z" fill="#eee" stroke="#333" /><circle cx="29" cy="4" r="2.500" fill="#144a6a" /></svg>
);

function TaskApp({ label, active = false, stack = false, w, children }: { label: string; active?: boolean; stack?: boolean; w: string; children: React.ReactNode }) {
  const look = active ? "rounded-t border border-b-0 border-[#4c5a70] bg-linear-to-br from-[#eef4fb] to-[#b9cbe2]" : "";
  return (
    <div className={"flex h-full shrink-0 " + w}>
      <button aria-label={label} className={"flex h-full flex-1 items-start justify-center overflow-hidden pt-[3px] " + look}>{children}</button>
      {stack && <div className="h-full w-1 border-r border-[#4c5a70] bg-[#d3dfee]" />}
    </div>
  );
}

function Taskbar() {
  return (
    <footer className="flex h-[33px] shrink-0 overflow-hidden border-t border-[#5a6880] bg-linear-to-r from-[#8496b2] via-[#a6bfdd] via-12% to-[#a6bfdd]">
      <button aria-label="Start" className="ml-[7px] w-[38px] shrink-0">
        <svg width="38" height="38" viewBox="0 0 38 38"><circle cx="19" cy="18.500" r="17.500" fill="url(#orb)" stroke="#4a6680" /><path d="M10 12q4-3 8-.8l-1.500 7q-4-2-8 .5z" fill="#e8592a" /><path d="M19.500 11.500q4 2 8 0l-1.500 7q-4 1.500-8 0z" fill="#7cc13a" /><path d="M8 20.500q4-2.500 8-.5l-1.500 7q-4-2-8 .5z" fill="#4a9de0" /><path d="M17.500 20.500q4 2 8 0l-1.500 7q-4 1.500-8 0z" fill="#f7c82e" /></svg>
      </button>
      <div className="ml-3"><Grip /></div>
      <div className="flex flex-1 pl-[7px]">
        <TaskApp label="WinRAR" w="w-[62px]"><RarIcon /></TaskApp>
        <TaskApp label="UniKey" w="w-[62px]"><UniIcon /></TaskApp>
        <TaskApp label="Adobe Reader" w="w-[62px]"><PdfIcon /></TaskApp>
        <TaskApp label="Excel" w="w-[61px]"><Doc c="#2a8a3c" l="X" /></TaskApp>
        <TaskApp label="Word" w="w-[63px]"><Doc c="#2458a8" l="W" /></TaskApp>
        <TaskApp label="Chrome" active w="w-[60px]"><ChromeIcon /></TaskApp>
        <div className="w-[2px]" />
        <TaskApp label="Internet Explorer" active stack w="w-[57px]"><IeIcon /></TaskApp>
        <TaskApp label="Foxit PDF" w="w-[68px]"><FoxitIcon /></TaskApp>
        <TaskApp label="Explorer" active stack w="w-[58px]"><FolderIcon /></TaskApp>
        <div className="w-[3px]" />
        <TaskApp label="Lync" active stack w="w-[60px]"><LyncIcon /></TaskApp>
        <div className="w-[3px]" />
        <TaskApp label="Outlook" active w="w-[60px]"><OutlookIcon /></TaskApp>
        <div className="w-[2px]" />
        <TaskApp label="TortoiseSVN" active w="w-[60px]"><TortoiseIcon /></TaskApp>
      </div>
      <div className="flex w-[269px] shrink-0 bg-linear-to-r from-[#a6bfdd] to-[#8093ae] to-15% pl-[33px] text-xs text-white">
        <Grip />
        <span className="ml-2 w-[31px] pt-2">EN</span>
        <div className="flex h-8 items-center gap-[9px] pt-2">
          <svg width="9" height="5" viewBox="0 0 9 5" className="mr-2"><path d="M0 5h9L4.500 0z" fill="#fff" /></svg>
          <svg width="16" height="16" viewBox="0 0 16 16"><path d="M2 1v14" stroke="#fff" strokeWidth="2" /><path d="M4 2.500h5l1 1.500h5l-2 3 1 3H9L8 9H4z" fill="#fff" stroke="#3c4a60" strokeWidth="0.700" /></svg>
          <svg width="17" height="17" viewBox="0 0 17 17" fill="none" stroke="#fff" strokeWidth="1.500"><rect x="5" y="4" width="11" height="8.500" fill="#5a6c88" /><path d="M8 15.500h6M1 1v4h4V1M3 5v9h3" /></svg>
          <svg width="15" height="15" viewBox="0 0 15 15"><path d="M1 5h2.500L8 1v13L3.500 10H1z" fill="#fff" stroke="#3c4a60" strokeWidth="0.700" /><path d="M10.500 4.500q2 3 0 6M12.500 3q3 4.500 0 9" fill="none" stroke="#fff" strokeWidth="1.200" /></svg>
        </div>
        <div className="ml-1 flex-1 pt-[3px] text-center leading-4"><p>17:29</p><p>28/02/2020</p></div>
        <button aria-label="Show desktop" className="ml-1 w-[14px] border border-[#4a5870] bg-linear-to-b from-[#a8b6ca] to-[#5e6f8c]" />
      </div>
    </footer>
  );
}

/* ---------- neighbouring window on the right edge ---------- */
const listTop = [...Array(19).fill("3_"), "GD", "GD", "1_", "  O", "  I", "  I", "  I", "  I", "  V"];
const listBottom = ["  V", "3_", "5_", "5_", "5_"];

function SideWindow() {
  return (
    <aside className={"flex w-[22px] shrink-0 flex-col overflow-hidden bg-[#f0f0f0] text-[11px] " + ui}>
      <div className="h-[9px] bg-[#dde8f3]" />
      <div className="flex h-9 items-end pl-[14px]">
        <button aria-label="Back" className="mb-[3px] flex h-[21px] w-5 shrink-0 items-center rounded-l border border-[#8a8f98] bg-white pl-[2px]">
          <svg width="12" height="10" viewBox="0 0 12 10" className="shrink-0"><path d="M5 0v3h7v4H5v3L0 5z" fill="#2c62d0" /></svg>
        </button>
      </div>
      <div className="ml-[11px] flex h-[918px] shrink-0 flex-col border border-r-0 border-[#8a8f98] bg-white pt-[2px] whitespace-pre">
        {listTop.map((t, i) => <div key={i} className="h-4 shrink-0 leading-4">{t}</div>)}
        {[0, 1, 2, 3].map((i) => <div key={i} className="ml-[5px] h-4 shrink-0 border border-r-0 border-[#e0cf70] bg-linear-to-br from-[#fbf4bd] to-[#d8c85a]" />)}
        <div className="mt-auto">{listBottom.map((t, i) => <div key={i} className="h-4 leading-4">{t}</div>)}</div>
        <div className="flex h-[18px] shrink-0 items-center bg-[#e8e8ea] pl-1"><svg width="5" height="8" viewBox="0 0 5 8"><path d="M5 0v8L0 4z" fill="#222" /></svg></div>
      </div>
    </aside>
  );
}

export default function App() {
  return (
    <div className={"flex h-screen min-h-[600px] overflow-hidden bg-[#f0f0f0] text-black " + ui}>
      <Defs />
      <div className="relative flex min-w-0 flex-1 flex-col">
        <header className="shrink-0">
          <div className="bg-linear-to-b from-[#a3bfdd] to-[#bdd3ec]">
            <TitleBar />
            <AddressBar />
          </div>
          <div className="border-t border-[#dfeaf6] bg-linear-to-b from-[#f3f8fe] to-[#dfeaf8] to-40%">
            <FavoritesBar />
            <TabRow />
          </div>
          <FindBar />
          <InfoBar />
        </header>
        <main className="flex min-h-0 flex-1 flex-col border-t-2 border-l border-[#6b7078] bg-[#e1ebe8] pt-[3px] pb-[13px] pl-[11px]">
          <DealHeader />
          <DealForm />
        </main>
        <StatusBar />
        <Taskbar />
        <Annotations />
      </div>
      <SideWindow />
    </div>
  );
}
